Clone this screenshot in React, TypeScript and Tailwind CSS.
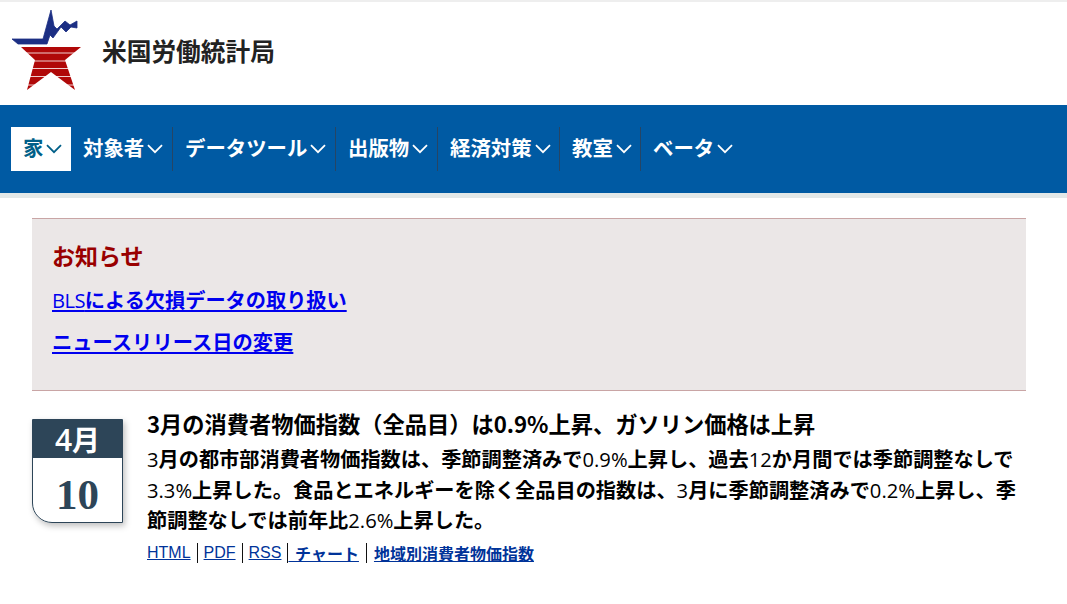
const cjk = "font-['Noto_Sans_CJK_JP','Noto_Sans',sans-serif]";

function Chevron({ className }: { className: string }) {
  return (
    <svg viewBox="0 0 16 10" className={className} fill="none" stroke="currentColor" strokeWidth="1.8">
      <path d="M1 1.2 L8 8.2 L15 1.2" />
    </svg>
  );
}

function Logo() {
  return (
    <svg viewBox="12 10 70 82" className="h-[82px] w-[70px]">
      <path
        d="M12 39 H43 L51 10 L54 26 L57 29 L65 21 L70 25 L77 21 V28 L71 27 L66 32 L61 27 L53 38 L50 35 L47 44 H18 Z"
        fill="#1c2f84"
        stroke="#1c2f84"
        strokeWidth="0.8"
      />
      <path d="M21 47 H81 L65 60 L75 90 L51 72 L27 90 L35 60 Z" fill="#b00808" />
      <path d="M20 53 H82 M20 61 H82 M20 68.5 H82 M20 76.5 H82 M20 85 H82" stroke="#fff" strokeWidth="1" opacity="0.8" />
    </svg>
  );
}

const navItems = [
  { label: "対象者", width: "w-[102px]", sep: true },
  { label: "データツール", width: "w-[163px]", sep: true },
  { label: "出版物", width: "w-[102px]", sep: true },
  { label: "経済対策", width: "w-[122px]", sep: true },
  { label: "教室", width: "w-[81px]", sep: true },
  { label: "ベータ", width: "w-[102px]", sep: false },
];

function L({ children }: { children: string }) {
  return <span className="font-['Open_Sans',sans-serif] font-normal">{children}</span>;
}

export default function App() {
  return (
    <div className={`min-h-[604px] bg-white ${cjk}`}>
      <div className="h-0.5 bg-[#eeeeee]" />
      <header className="flex h-[103px] items-start pl-3 pt-2">
        <Logo />
        <div className="ml-5 mt-[24px] text-[24.7px] leading-8 font-bold text-[#222]">米国労働統計局</div>
      </header>
      <nav className="flex h-[88px] items-start bg-[#005aa3] pl-[11px] pt-[22px]">
        <div className="flex h-11 w-[60px] items-center gap-[3px] bg-white pb-[3px] pl-3 text-[20.4px] font-bold text-[#005f88]">
          家
          <Chevron className="mt-[3px] h-2.5 w-4 shrink-0" />
        </div>
        {navItems.map((item) => (
          <div
            key={item.label}
            className={`flex h-11 items-center gap-[3px] whitespace-nowrap pb-[3px] pl-3 text-[20.4px] font-bold text-white ${item.width} ${item.sep ? "border-r border-[#264564]" : ""}`}
          >
            {item.label}
            <Chevron className="mt-[3px] h-2.5 w-4 shrink-0" />
          </div>
        ))}
      </nav>
      <div className="h-[5px] bg-[#e2e8e8]" />
      <main className="pl-8 pr-[41px] pt-5">
        <section className="h-[173px] border-y border-[#c9a5a5] bg-[#ebe7e7] px-5 pt-[20px]">
          <h2 className="text-[23px] leading-8 font-bold text-[#990000]">お知らせ</h2>
          <p className="mt-[15px] text-[20.2px] leading-7 font-bold text-[#0000ee] underline">
            <span className="font-['Open_Sans',sans-serif] font-normal tracking-[-0.6px]">BLS</span>による欠損データの取り扱い
          </p>
          <p className="mt-[13px] text-[20.3px] leading-7 font-bold text-[#0000ee] underline">ニュースリリース日の変更</p>
        </section>
        <section className="mt-[19px] flex">
          <div className="mt-[9px] h-[104px] w-[91px] shrink-0 overflow-hidden rounded-bl-[20px] border border-[#2d4558] shadow-[2px_3px_6px_rgba(0,0,0,0.25)]">
            <div className="flex h-[38px] items-center justify-center bg-[#2d4558] text-[28px] font-bold text-white">
              <span className="font-['Open_Sans',sans-serif] text-[30px] font-semibold">4</span>月
            </div>
            <div className="flex h-[64px] items-center justify-center pt-2.5 font-['Liberation_Serif',serif] text-[43px] font-bold text-[#2d4558]">10</div>
          </div>
          <div className="ml-6 min-w-0 flex-1 text-black">
            <h3 className="-mt-[3px] mb-[5px] text-[22.24px] leading-8 font-bold">3月の消費者物価指数（全品目）は0.9%上昇、ガソリン価格は上昇</h3>
            <p className="text-[20.2px] leading-[30.5px] font-bold">
              <L>3</L>月の都市部消費者物価指数は、季節調整済みで<L>0.9%</L>上昇し、過去<L>12</L>か月間では季節調整なしで<L>3.3%</L>上昇した。食品とエネルギーを除く全品目の指数は、<L>3</L>月に季節調整済みで<L>0.2%</L>上昇し、季節調整なしでは前年比<L>2.6%</L>上昇した。
            </p>
            <div className="mt-[7px] flex items-center text-[16px] leading-5 text-[#003399]">
              <a className="font-['Liberation_Sans',sans-serif] underline">HTML</a>
              <span className="mx-1.5 h-5 w-px bg-[#111]" />
              <a className="font-['Liberation_Sans',sans-serif] underline">PDF</a>
              <span className="mx-1.5 h-5 w-px bg-[#111]" />
              <a className="font-['Liberation_Sans',sans-serif] underline">RSS</a>
              <span className="ml-1.5 h-5 w-px bg-[#111]" />
              <a className="whitespace-pre font-bold underline [word-spacing:3px]"> チャート</a>
              <span className="mx-[7px] h-5 w-px bg-[#111]" />
              <a className="font-bold underline">地域別消費者物価指数</a>
            </div>
          </div>
        </section>
      </main>
    </div>
  );
}
